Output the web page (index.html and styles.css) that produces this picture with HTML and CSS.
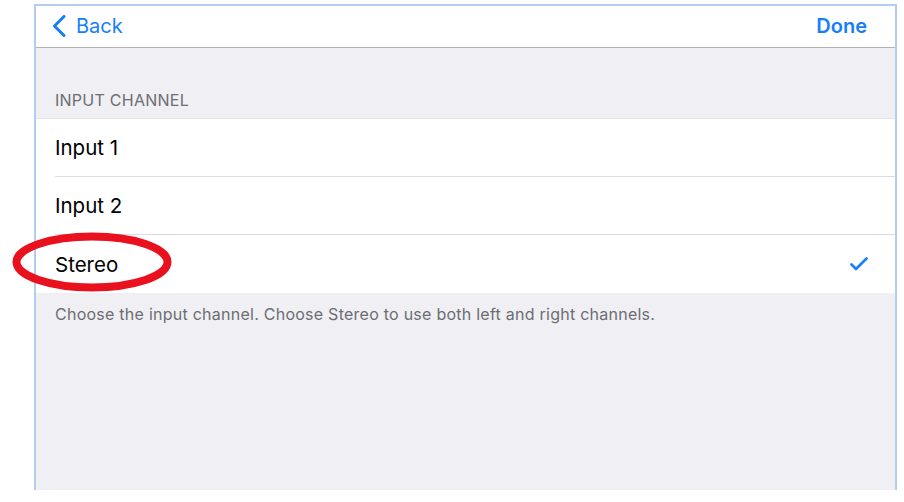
FILE: index.html
```html
<!DOCTYPE html>
<html>
<head>
<meta charset="utf-8">
<link rel="stylesheet" href="styles.css">
</head>
<body>
<div class="panel">
  <div class="navbar">
    <a class="back">
      <svg class="chev" width="14" height="22" viewBox="0 0 14 22"><path d="M12 1.5 L2.5 11 L12 20.5" fill="none" stroke="#157efb" stroke-width="3" stroke-linecap="round" stroke-linejoin="round"/></svg>
      <span>Back</span>
    </a>
    <a class="done">Done</a>
  </div>
  <div class="content">
    <div class="section-header">INPUT CHANNEL</div>
    <div class="group">
      <div class="row"><span class="label">Input 1</span></div>
      <div class="row"><span class="label">Input 2</span></div>
      <div class="row selected">
        <span class="label">Stereo</span>
        <svg class="check" width="18" height="14" viewBox="0 0 18 14"><path d="M1.5 7.5 L6 12 L16.5 1.5" fill="none" stroke="#157efb" stroke-width="2.6" stroke-linecap="round" stroke-linejoin="round"/></svg>
      </div>
    </div>
    <div class="section-footer">Choose the input channel. Choose Stereo to use both left and right channels.</div>
  </div>
  <svg class="annotation" width="166" height="66" viewBox="0 0 166 66"><ellipse cx="83" cy="33" rx="75.5" ry="25.5" fill="none" stroke="#e8111d" stroke-width="8"/></svg>
</div>
</body>
</html>
```
FILE: styles.css
```css
html, body {
  margin: 0;
  padding: 0;
  background: #ffffff;
}
body {
  font-family: "Inter", "Liberation Sans", sans-serif;
  -webkit-font-smoothing: antialiased;
}
.panel {
  position: relative;
  margin: 4px 0 0 34px;
  width: 859px;
  height: 484px;
  border: 2px solid #b3cdf1;
  border-bottom: none;
  background: #efeff4;
  display: flex;
  flex-direction: column;
  box-sizing: content-box;
}
.navbar {
  height: 41px;
  background: #ffffff;
  border-bottom: 1px solid #b2b2b2;
  display: flex;
  align-items: center;
  justify-content: space-between;
  padding: 0 28px 2px 16px;
  box-sizing: border-box;
  flex: none;
  height: 42px;
}
.back {
  display: flex;
  align-items: center;
  gap: 10px;
  color: #157efb;
  font-size: 20px;
}
.chev {
  display: block;
}
.done {
  color: #157efb;
  font-size: 20px;
  font-weight: 600;
}
.content {
  flex: 1;
  display: flex;
  flex-direction: column;
}
.section-header {
  padding: 43px 0 0 19px;
  height: 27px;
  line-height: 18px;
  box-sizing: content-box;
  font-size: 16px;
  letter-spacing: 0.25px;
  color: #6d6d72;
}
.group {
  background: #ffffff;
  border-top: 1px solid #e4e4e8;
}
.row {
  height: 57px;
  margin-left: 19px;
  padding-right: 28px;
  display: flex;
  align-items: center;
  justify-content: space-between;
  border-bottom: 1px solid #dcdce0;
}
.row:last-child {
  border-bottom: none;
  height: 58px;
}
.label {
  font-size: 20.5px;
  color: #000000;
}
.check {
  display: block;
  margin-right: -1px;
}
.section-footer {
  padding: 11px 0 0 19px;
  font-size: 16px;
  letter-spacing: 0.25px;
  line-height: 20px;
  color: #6d6d72;
}
.annotation {
  position: absolute;
  left: -27px;
  top: 223px;
}
```
